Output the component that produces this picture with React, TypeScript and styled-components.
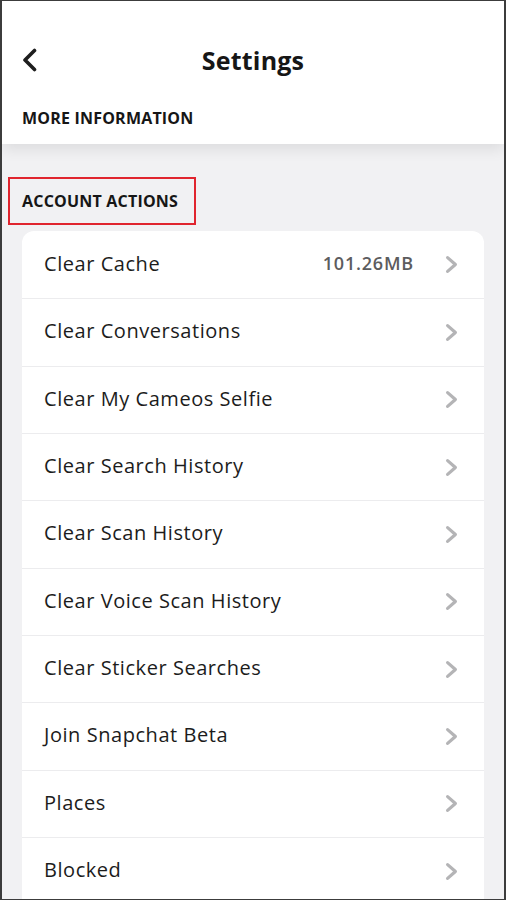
import React from 'react';
import styled, { createGlobalStyle } from 'styled-components';

const GlobalStyle = createGlobalStyle`
	html, body {
		margin: 0;
		padding: 0;
		background: #ffffff;
	}
	* {
		box-sizing: border-box;
	}
`;

const FrameUI = styled.div`
	width: 506px;
	height: 900px;
	overflow: hidden;
	border: 1px solid #3c3c3c;
	border-left-width: 2px;
	border-right-width: 2px;
	background: #f1f1f3;
	font-family: 'Open Sans', 'Lato', sans-serif;
	color: #1a1a1a;
	display: flex;
	flex-direction: column;
`;

const HeaderUI = styled.header`
	position: relative;
	z-index: 1;
	height: 143px;
	background: #ffffff;
	box-shadow: 0 5px 14px rgba(0, 0, 0, 0.09);
	display: flex;
	flex-direction: column;
`;

const NavUI = styled.div`
	padding-top: 26px;
	display: grid;
	grid-template-columns: 60px 1fr 60px;
	align-items: center;
	height: 94px;
`;

const BackUI = styled.div`
	display: flex;
	align-items: center;
	padding-left: 20px;
	height: 40px;
`;

const TitleUI = styled.h1`
	margin: 0;
	text-align: center;
	font-size: 25px;
	font-weight: 700;
	letter-spacing: 0.2px;
	color: #161616;
`;

const SectionLabelUI = styled.div<{ $boxed?: boolean }>`
	font-size: 16px;
	font-weight: 700;
	letter-spacing: 0.2px;
	color: #161616;
	padding-left: 20px;
	line-height: 52px;
	${(p) =>
		p.$boxed &&
		`
		align-self: flex-start;
		margin-left: 6px;
		padding: 0 16px 0 12px;
		line-height: 44px;
		border: 2px solid #e0242e;
	`}
`;

const ContentUI = styled.main`
	flex: 1;
	display: flex;
	flex-direction: column;
	padding: 33px 20px 0 0;
`;

const CardUI = styled.ul`
	margin: 6px 0 0 20px;
	padding: 0;
	list-style: none;
	background: #ffffff;
	border-radius: 12px 12px 0 0;
`;

const RowUI = styled.li`
	height: 67.33px;
	display: flex;
	align-items: center;
	padding: 0 26px 0 22px;
	& + & {
		border-top: 1px solid #ececee;
	}
`;

const LabelUI = styled.span`
	flex: 1;
	font-size: 20px;
	font-weight: 400;
	letter-spacing: 0.55px;
	color: #1c1c1c;
	margin-top: -3px;
`;

const ValueUI = styled.span`
	font-size: 18px;
	font-weight: 600;
	letter-spacing: 0.8px;
	color: #5c5c5e;
	margin-right: 31px;
	margin-top: -3px;
`;

const Chevron = ({ color, w, h, sw }: { color: string; w: number; h: number; sw: number }) => (
	<svg width={w} height={h} viewBox={`0 0 ${w} ${h}`} fill='none'>
		<polyline
			points={`${sw / 2 + 1},${sw / 2 + 1} ${w - sw / 2 - 1},${h / 2} ${sw / 2 + 1},${h - sw / 2 - 1}`}
			stroke={color}
			strokeWidth={sw}
			strokeLinecap='round'
			strokeLinejoin='round'
		/>
	</svg>
);

const BackIcon = () => (
	<svg width='16' height='24' viewBox='0 0 16 24' fill='none'>
		<polyline points='12.5,2.5 3,12 12.5,21.5' stroke='#1e1e1e' strokeWidth='3.6' strokeLinecap='round' strokeLinejoin='round' />
	</svg>
);

const rows: { title: string; value?: string }[] = [
	{ title: 'Clear Cache', value: '101.26MB' },
	{ title: 'Clear Conversations' },
	{ title: 'Clear My Cameos Selfie' },
	{ title: 'Clear Search History' },
	{ title: 'Clear Scan History' },
	{ title: 'Clear Voice Scan History' },
	{ title: 'Clear Sticker Searches' },
	{ title: 'Join Snapchat Beta' },
	{ title: 'Places' },
	{ title: 'Blocked' },
];

const renderRowsJSX = () =>
	rows.map(({ title, value }) => (
		<RowUI key={title}>
			<LabelUI>{title}</LabelUI>
			{value && <ValueUI>{value}</ValueUI>}
			<Chevron color='#b4b4b6' w={13} h={19} sw={3.2} />
		</RowUI>
	));

const App = () => (
	<>
		<GlobalStyle />
		<FrameUI>
			<HeaderUI>
				<NavUI>
					<BackUI>
						<BackIcon />
					</BackUI>
					<TitleUI>Settings</TitleUI>
					<div />
				</NavUI>
				<SectionLabelUI>MORE INFORMATION</SectionLabelUI>
			</HeaderUI>
			<ContentUI>
				<SectionLabelUI $boxed>ACCOUNT ACTIONS</SectionLabelUI>
				<CardUI>{renderRowsJSX()}</CardUI>
			</ContentUI>
		</FrameUI>
	</>
);

export default App;
